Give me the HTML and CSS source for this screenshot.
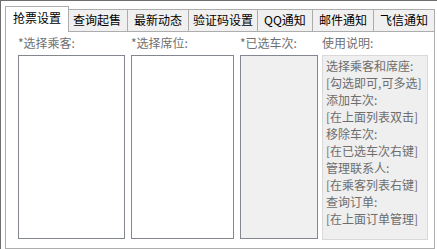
FILE: index.html
```html
<!DOCTYPE html>
<html>
<head>
	<meta charset="utf-8">
	<meta name="viewport" content="width=device-width, initial-scale=1">
	<title>抢票设置</title>
	<link rel="stylesheet" href="styles.css">
</head>
<body>

	<div class="window">
		<div class="tabs">
			<div class="tab active">抢票设置</div>
			<div class="tab">查询起售</div>
			<div class="tab">最新动态</div>
			<div class="tab tab-long">验证码设置</div>
			<div class="tab">QQ通知</div>
			<div class="tab">邮件通知</div>
			<div class="tab">飞信通知</div>
		</div>

		<div class="panel">
			<div class="col">
				<div class="label">*选择乘客:</div>
				<div class="list"></div>
			</div>
			<div class="col">
				<div class="label">*选择席位:</div>
				<div class="list"></div>
			</div>
			<div class="col">
				<div class="label">*已选车次:</div>
				<div class="list disabled"></div>
			</div>
			<div class="col col-help">
				<div class="label">使用说明:</div>
				<div class="help">
					<p>选择乘客和席座:</p>
					<p>[勾选即可,可多选]</p>
					<p>添加车次:</p>
					<p>[在上面列表双击]</p>
					<p>移除车次:</p>
					<p>[在已选车次右键]</p>
					<p>管理联系人:</p>
					<p>[在乘客列表右键]</p>
					<p>查询订单:</p>
					<p>[在上面订单管理]</p>
				</div>
			</div>
		</div>
	</div>

</body>
</html>
```

FILE: styles.css
```css
body,p{margin: 0;}
body{
	background: #fff;
	font-family: "Noto Sans CJK SC", "Noto Sans", sans-serif;
	font-size: 12px;
	color: #000;
}

.window{
	height: 249px;
	box-sizing: border-box;
	border-left: 1px solid #6e6e6e;
	border-top: 1px solid #6e6e6e;
	padding-left: 4px;
}

/* tab strip */
.tabs{
	display: flex;
	align-items: flex-end;
	height: 30px;
	padding-left: 2px;
}
.tab{
	box-sizing: border-box;
	height: 22px;
	line-height: 20px;
	padding: 0 6px;
	margin-left: -1px;
	border: 1px solid #acacac;
	border-bottom: none;
	background: #f0f0f0;
	white-space: nowrap;
}
.tab:first-child{margin-left: 0;}
.tab-long{padding: 0 4px;}
.tab.active{
	position: relative;
	z-index: 1;
	height: 26px;
	line-height: 22px;
	margin: 0 -2px -1px -2px;
	padding: 0 7px;
	background: #fff;
}

/* page */
.panel{
	box-sizing: border-box;
	width: 430px;
	height: 218px;
	border: 1px solid #adadad;
	padding-left: 12px;
	display: flex;
	gap: 6px;
}
.col{width: 107px;}
.col:nth-child(2){width: 103px;}
.col:nth-child(3){width: 78px;}
.col-help{width: 106px; margin-left: -2px;}

.label{
	padding-top: 3px;
	height: 20px;
	line-height: 16px;
	color: #707070;
}

.list{
	box-sizing: border-box;
	height: 184px;
	border: 1px solid #828790;
	background: #fff;
}
.list.disabled{background: #f0f0f0;}

.help{
	box-sizing: border-box;
	height: 185px;
	border: 1px solid #d9d9d9;
	background: #efefef;
	padding: 1px 0 0 3px;
	line-height: 17px;
	color: #6d6d6d;
	white-space: nowrap;
}
```
